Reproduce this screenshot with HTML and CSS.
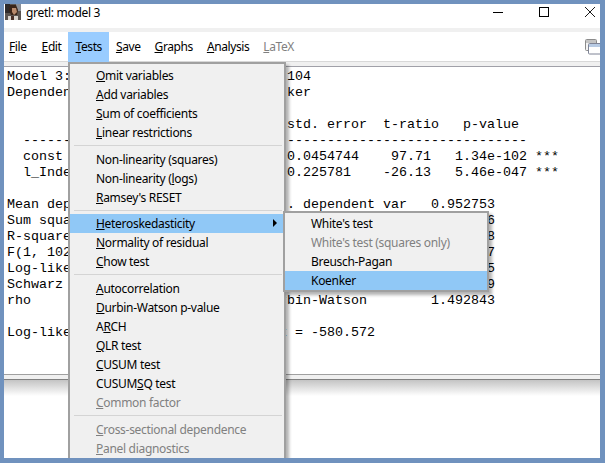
FILE: index.html
```html
<!DOCTYPE html>
<html lang="en">
<head>
  <meta charset="UTF-8">
  <title>gretl: model 3</title>
  <link rel="stylesheet" href="styles.css">
</head>
<body>
  <div class="window">
    <div class="titlebar">
      <svg class="app-icon" width="16" height="16" viewBox="0 0 16 16">
        <rect width="16" height="16" fill="#5b5450"/>
        <rect x="0" y="0" width="5" height="9" fill="#2e2a2a"/>
        <rect x="11" y="0" width="5" height="7" fill="#8a8f98"/>
        <path d="M5 1h6l2 5-1 5H6L4 6z" fill="#3a2418"/>
        <path d="M7 4h4l1 4-3 3-2-3z" fill="#b98a6c"/>
        <path d="M3 12h10v4H3z" fill="#d8d2cc"/>
        <path d="M6 12h3v4H6z" fill="#4a3028"/>
      </svg>
      <span class="title-text">gretl: model 3</span>
      <div class="win-buttons">
        <span class="win-btn"><svg width="12" height="12" viewBox="0 0 12 12"><path d="M1 6.5h10" stroke="#000"/></svg></span>
        <span class="win-btn"><svg width="12" height="12" viewBox="0 0 12 12"><rect x="1.5" y="1.5" width="9" height="9" fill="none" stroke="#000"/></svg></span>
        <span class="win-btn"><svg width="12" height="12" viewBox="0 0 12 12"><path d="M1 1l10 10M11 1L1 11" stroke="#000" stroke-width="0.9"/></svg></span>
      </div>
    </div>
    <div class="band"></div>
    <div class="menubar">
      <span class="menu-label first"><u>F</u>ile</span>
      <span class="menu-label"><u>E</u>dit</span>
      <span class="menu-label active"><u>T</u>ests</span>
      <span class="menu-label"><u>S</u>ave</span>
      <span class="menu-label"><u>G</u>raphs</span>
      <span class="menu-label"><u>A</u>nalysis</span>
      <span class="menu-label disabled"><u>L</u>aTeX</span>
      <svg class="restore-icon" width="15" height="16" viewBox="0 0 15 16">
        <rect x="0.5" y="0.5" width="11" height="11" rx="1" fill="#f4f4f4" stroke="#8c8c8c"/>
        <rect x="1" y="1" width="10" height="3" fill="#c4c4c4"/>
        <rect x="3.5" y="4.5" width="13" height="10.5" rx="1" fill="#fff" stroke="#7f8496"/>
        <rect x="4" y="5" width="12" height="3" fill="#b8cbe4"/>
      </svg>
    </div>
    <div class="toolbar-edge"></div>
<pre class="output">Model 3: OLS, using observations 1-104
Dependent variable:                ker

                                   std. error  t-ratio   p-value
  ---------------------------------------------------------------
  const                            0.0454744    97.71   1.34e-102 ***
  l_Index                          0.225781    -26.13   5.46e-047 ***

Mean dependent var                 . dependent var   0.952753
Sum squared resid                                           6
R-squared                                                   8
F(1, 102)                                                   7
Log-likelihood                                              5
Schwarz criterion                                           9
rho                             Durbin-Watson        1.492843

Log-likelihood                    x = -580.572
</pre>
    <div class="status-band"></div>
    <div class="bottom-edge"></div>

    <ul class="menu tests-menu">
      <li class="item"><u>O</u>mit variables</li>
      <li class="item"><u>A</u>dd variables</li>
      <li class="item"><u>S</u>um of coefficients</li>
      <li class="item"><u>L</u>inear restrictions</li>
      <li class="sep"></li>
      <li class="item">Non-linearity (squares)</li>
      <li class="item">Non-linearity (<u>l</u>ogs)</li>
      <li class="item"><u>R</u>amsey's RESET</li>
      <li class="sep tight"></li>
      <li class="item selected"><u>H</u>eteroskedasticity<span class="arrow"></span></li>
      <li class="item"><u>N</u>ormality of residual</li>
      <li class="item"><u>C</u>how test</li>
      <li class="sep"></li>
      <li class="item"><u>A</u>utocorrelation</li>
      <li class="item"><u>D</u>urbin-Watson p-value</li>
      <li class="item">A<u>R</u>CH</li>
      <li class="item"><u>Q</u>LR test</li>
      <li class="item"><u>C</u>USUM test</li>
      <li class="item">CUSUM<u>S</u>Q test</li>
      <li class="item disabled"><u>C</u>ommon factor</li>
      <li class="sep"></li>
      <li class="item disabled"><u>C</u>ross-sectional dependence</li>
      <li class="item disabled"><u>P</u>anel diagnostics</li>
    </ul>

    <ul class="menu hetero-menu">
      <li class="item">White's test</li>
      <li class="item disabled">White's test (squares only)</li>
      <li class="item">Breusch-Pagan</li>
      <li class="item selected">Koenker</li>
    </ul>
  </div>
</body>
</html>
```

FILE: styles.css
```css
html, body {
  margin: 0;
  height: 100%;
}

body {
  background-color: #7092be;
  font-family: "Noto Sans", sans-serif;
  font-size: 12px;
  letter-spacing: -0.3px;
  color: #000;
  overflow: hidden;
}

.window {
  position: absolute;
  left: 4px;
  top: 4px;
  width: 596px;
  height: 454px;
  background: #fff;
  display: flex;
  flex-direction: column;
  overflow: hidden;
}

.titlebar {
  height: 24px;
  flex: none;
  display: flex;
  align-items: flex-start;
  padding-left: 1px;
}

.app-icon {
  margin-right: 5px;
}

.title-text {
  line-height: 18px;
}

.win-buttons {
  margin-left: auto;
  margin-right: -13px;
  padding-top: 2px;
  display: flex;
}

.win-btn {
  width: 46px;
  display: flex;
  justify-content: center;
}

.band {
  height: 4px;
  flex: none;
  background: #f0f0f0;
}

.menubar {
  height: 29px;
  flex: none;
  display: flex;
  align-items: flex-start;
  letter-spacing: -0.4px;
}

.menu-label {
  padding: 0 7px;
  height: 30px;
  line-height: 30px;
}

.menu-label.first {
  padding-left: 5px;
  padding-right: 8px;
}

.menu-label.active {
  position: relative;
  background: #99ccff;
}

.menu-label.disabled {
  color: #808080;
}

.restore-icon {
  margin-left: auto;
  margin-top: 7px;
}

.toolbar-edge {
  height: 6px;
  flex: none;
  background: #f0f0f0;
  border-top: 1px solid #d8d8d8;
  border-bottom: 1px solid #a0a0a8;
  box-sizing: border-box;
}

.output {
  margin: 0;
  padding: 2px 0 0 3px;
  height: 307px;
  flex: none;
  font-family: "Liberation Mono", monospace;
  font-size: 13.33px;
  line-height: 16px;
  letter-spacing: 0;
  box-sizing: border-box;
  overflow: hidden;
}

.status-band {
  flex: none;
  height: 5px;
  background: #f0f0f0;
  border-top: 1px solid #a0a0a0;
  box-sizing: border-box;
}

.bottom-edge {
  flex: none;
  height: 16px;
  border-top: 1px solid #808080;
  background: linear-gradient(#c4c4c4, #fff);
}

.menu {
  position: absolute;
  margin: 0;
  padding: 0;
  list-style: none;
  background: #f0f0f0;
  border: 2px solid #a0a0a0;
  box-shadow: 3px 3px 3px rgba(0, 0, 0, 0.3);
  box-sizing: border-box;
}

.tests-menu {
  left: 64px;
  top: 58px;
  width: 218px;
  padding-top: 2px;
}

.hetero-menu {
  left: 279px;
  top: 207px;
  width: 206px;
  height: 81px;
  padding-top: 1px;
}

.item {
  height: 19px;
  line-height: 19px;
  padding-left: 26px;
  position: relative;
  white-space: nowrap;
}

.item.selected {
  background: #90c8f6;
}

.item.disabled {
  color: #808080;
}

.sep {
  height: 1px;
  margin: 3px 2px 4px 4px;
  background: #d4d4d4;
}

.sep.tight {
  margin-bottom: 3px;
}

.arrow {
  position: absolute;
  right: 7px;
  top: 5px;
  border-left: 4px solid #000;
  border-top: 4px solid transparent;
  border-bottom: 4px solid transparent;
}
```
